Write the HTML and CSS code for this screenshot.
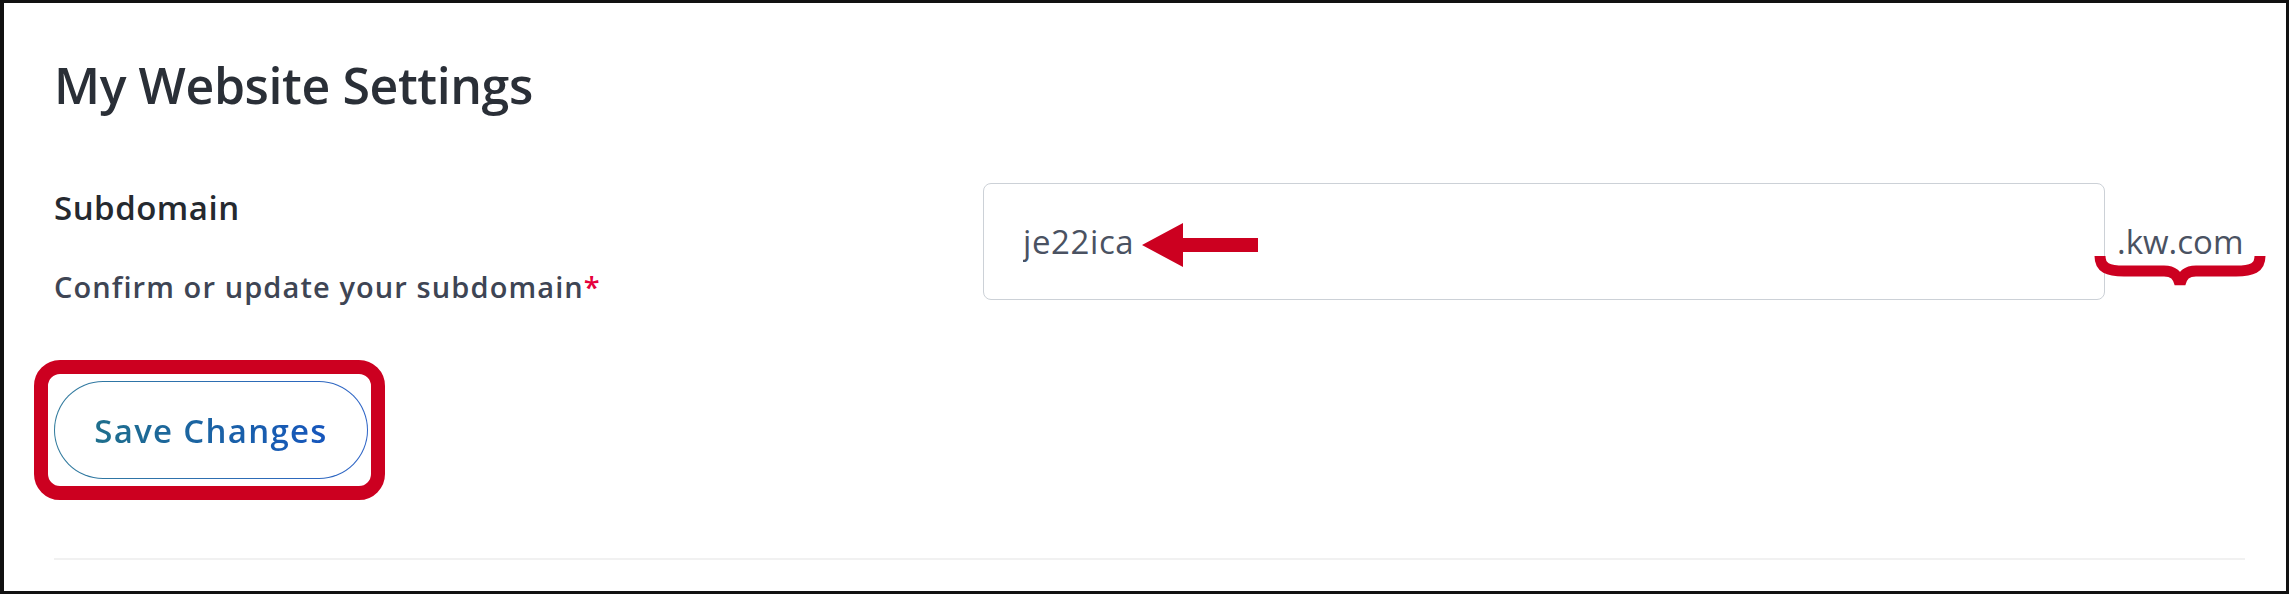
FILE: index.html
```html
<!DOCTYPE html>
<html lang="en">
<head>
  <meta charset="UTF-8" />
  <title>My Website Settings</title>
  <link rel="stylesheet" href="styles.css">
</head>
<body>

  <div class="frame">
    <section class="settings">
      <h1 class="settings-title">My Website Settings</h1>

      <!-- Subdomain row -->
      <div class="field-row">
        <div class="field-labels">
          <div class="field-name">Subdomain</div>
          <div class="field-hint">Confirm or update your subdomain<span class="required">*</span></div>
        </div>
        <div class="field-control">
          <div class="input-wrap">
            <input class="text-input" type="text" value="je22ica" />
            <svg class="arrow" width="116" height="44" viewBox="0 0 116 44" aria-hidden="true">
              <polygon points="0,22 41,0 41,15 116,15 116,29 41,29 41,44" fill="#cc0020" />
            </svg>
          </div>
          <div class="suffix">.kw.com
            <svg class="brace" width="172" height="34" viewBox="0 0 172 34" aria-hidden="true">
              <path d="M6 2 C6 14 14 17 30 17 L70 17 C80 17 84 22 86 30 C88 22 92 17 102 17 L142 17 C158 17 166 14 166 2" fill="none" stroke="#cc0020" stroke-width="11" />
            </svg>
          </div>
        </div>
      </div>

      <div class="actions">
        <span class="highlight"></span>
        <button class="save-button" type="button"><span>Save Changes</span></button>
      </div>

      <hr class="divider" />
    </section>
  </div>

</body>
</html>
```

FILE: styles.css
```css
body {
  margin: 0;
  background: #fff;
  font-family: 'Open Sans', 'Noto Sans', sans-serif;
  color: #2a2f37;
}

/* Outer screenshot frame */
.frame {
  width: 2289px;
  height: 594px;
  box-sizing: border-box;
  border: 3px solid #111;
  border-left-width: 4px;
}

.settings {
  padding: 52px 41px 0 50px;
}

.settings-title {
  margin: 0;
  font-size: 50px;
  line-height: 60px;
  font-weight: 600;
  letter-spacing: -0.4px;
  color: #2a2f37;
}

/* Field row */
.field-row {
  display: flex;
  align-items: flex-start;
  margin-top: 68px;
}

.field-labels {
  width: 929px;
  flex-shrink: 0;
  padding-top: 5px;
}

.field-name {
  font-size: 33px;
  line-height: 40px;
  font-weight: 600;
  letter-spacing: 0.5px;
  color: #25292f;
}

.field-hint {
  margin-top: 41px;
  font-size: 29px;
  line-height: 36px;
  font-weight: 600;
  letter-spacing: 1.1px;
  color: #3e4554;
}

.required {
  color: #e6003c;
}

.field-control {
  display: flex;
  align-items: center;
}

.input-wrap {
  position: relative;
}

.text-input {
  display: block;
  width: 1122px;
  height: 117px;
  box-sizing: border-box;
  border: 1.5px solid #ccd1d7;
  border-radius: 8px;
  padding: 0 0 0 39px;
  font-family: 'Open Sans', sans-serif;
  font-size: 33px;
  letter-spacing: 0.6px;
  color: #4a5262;
  background: #fff;
  outline: none;
}

/* Annotation arrow pointing at the value */
.arrow {
  position: absolute;
  left: 159px;
  top: 40px;
}

.suffix {
  position: relative;
  margin-left: 12px;
  font-size: 33px;
  line-height: 40px;
  color: #4a5262;
}

.brace {
  position: absolute;
  left: -23px;
  top: 32px;
}

/* Save button */
.actions {
  position: relative;
  display: inline-block;
  margin-top: 76px;
}

.highlight {
  position: absolute;
  left: -20px;
  right: -17px;
  top: -21px;
  bottom: -21px;
  border: 14px solid #cc0020;
  border-radius: 26px;
}

.save-button {
  display: block;
  width: 314px;
  height: 98px;
  padding: 0;
  border: 1.5px solid transparent;
  border-radius: 49px;
  background: linear-gradient(#fff, #fff) padding-box,
              linear-gradient(90deg, #2f7a9c, #2c63c6) border-box;
  font-family: 'Open Sans', sans-serif;
  font-size: 33px;
  font-weight: 600;
  letter-spacing: 1.3px;
  cursor: pointer;
}

.save-button span {
  background: linear-gradient(90deg, #1f6f8c, #1656bd);
  -webkit-background-clip: text;
  background-clip: text;
  color: transparent;
}

.divider {
  margin: 79px 0 0;
  border: none;
  height: 2px;
  background: #f1f1f1;
}
```
